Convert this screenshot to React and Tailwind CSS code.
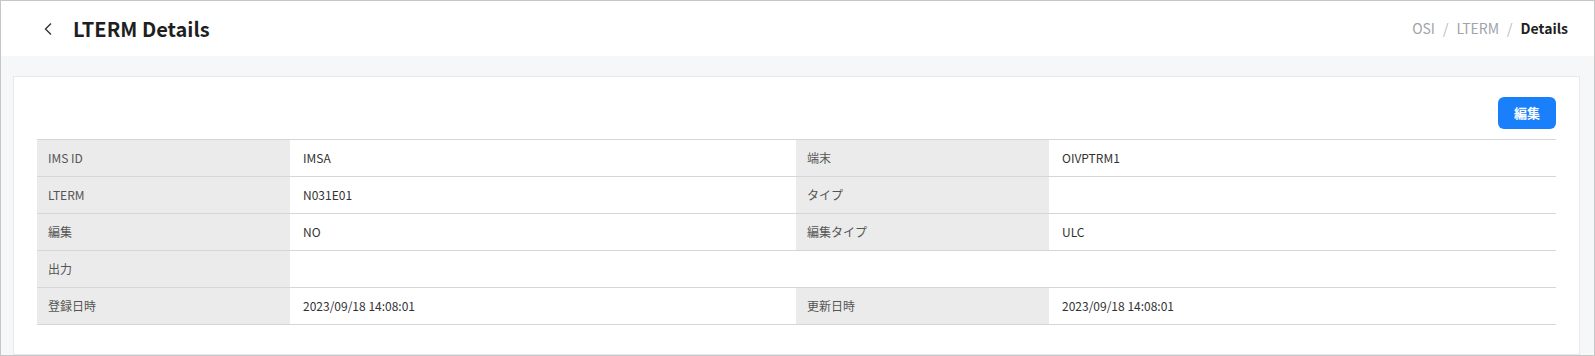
import React from "react";

const font = { fontFamily: '"Noto Sans CJK JP", "Noto Sans", sans-serif' };

function Label({ children }) {
  return (
    <td className="h-[37px] border-b border-[#d6d6d6] bg-[#ebebeb] pl-[11px] text-[12px] text-[#555555]">
      {children}
    </td>
  );
}
function Value({ children, colSpan }) {
  return (
    <td colSpan={colSpan} className="h-[37px] border-b border-[#d6d6d6] bg-white pl-[13px] text-[12px] text-[#333333]">
      {children}
    </td>
  );
}

export default function App() {
  return (
    <div style={font} className="w-[1595px] h-[356px] overflow-hidden border border-[#c6c6c6] bg-[#f6f7f9] flex flex-col">
      <div className="h-[55px] shrink-0 bg-white flex items-center justify-between pl-[42px] pr-[26px]">
        <div className="flex items-center">
          <svg width="10" height="14" viewBox="0 0 10 14" className="mr-[20px]">
            <path d="M8 1.5 L2.5 7 L8 12.5" fill="none" stroke="#333" strokeWidth="1.4" />
          </svg>
          <h1 className="text-[20px] font-bold text-[#1f1f1f] leading-none">LTERM Details</h1>
        </div>
        <div className="flex items-center text-[14px] gap-[8px]">
          <span className="text-[#a0a4ab]">OSI</span>
          <span className="text-[#b8bbc0]">/</span>
          <span className="text-[#a0a4ab]">LTERM</span>
          <span className="text-[#b8bbc0]">/</span>
          <span className="font-bold text-[#1f1f1f]">Details</span>
        </div>
      </div>
      <div className="flex-1 pt-[20px] pl-[12px] pr-[14px]">
        <div className="h-full bg-white border border-[#e8e9ec] pt-[20px] px-[23px]">
          <div className="flex justify-end mb-[10px]">
            <button className="w-[58px] h-[32px] rounded-[6px] bg-[#1a7ffb] text-white text-[13px] font-bold">
              編集
            </button>
          </div>
          <table className="w-full table-fixed border-collapse border-t border-[#d6d6d6]">
            <colgroup>
              <col className="w-[253px]" />
              <col className="w-[506px]" />
              <col className="w-[253px]" />
              <col />
            </colgroup>
            <tbody>
              <tr>
                <Label>IMS ID</Label>
                <Value>IMSA</Value>
                <Label>端末</Label>
                <Value>OIVPTRM1</Value>
              </tr>
              <tr>
                <Label>LTERM</Label>
                <Value>N031E01</Value>
                <Label>タイプ</Label>
                <Value></Value>
              </tr>
              <tr>
                <Label>編集</Label>
                <Value>NO</Value>
                <Label>編集タイプ</Label>
                <Value>ULC</Value>
              </tr>
              <tr>
                <Label>出力</Label>
                <Value colSpan={3}></Value>
              </tr>
              <tr>
                <Label>登録日時</Label>
                <Value>2023/09/18 14:08:01</Value>
                <Label>更新日時</Label>
                <Value>2023/09/18 14:08:01</Value>
              </tr>
            </tbody>
          </table>
        </div>
      </div>
    </div>
  );
}
